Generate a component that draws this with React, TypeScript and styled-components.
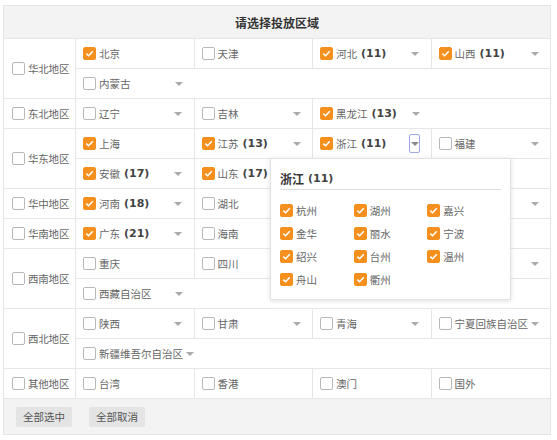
import React from "react"
import styled, { createGlobalStyle, css } from "styled-components"

type Province = {
  name: string
  count?: number
  checked?: boolean
  more?: boolean
  open?: boolean
}

type Region = {
  name: string
  rows: Province[][]
}

const regions: Region[] = [
  {
    name: "华北地区",
    rows: [
      [
        { name: "北京", checked: true },
        { name: "天津" },
        { name: "河北", count: 11, checked: true, more: true },
        { name: "山西", count: 11, checked: true, more: true },
      ],
      [{ name: "内蒙古", more: true }],
    ],
  },
  {
    name: "东北地区",
    rows: [
      [
        { name: "辽宁", more: true },
        { name: "吉林", more: true },
        { name: "黑龙江", count: 13, checked: true, more: true },
      ],
    ],
  },
  {
    name: "华东地区",
    rows: [
      [
        { name: "上海", checked: true },
        { name: "江苏", count: 13, checked: true, more: true },
        { name: "浙江", count: 11, checked: true, more: true, open: true },
        { name: "福建", more: true },
      ],
      [
        { name: "安徽", count: 17, checked: true, more: true },
        { name: "山东", count: 17, checked: true, more: true },
      ],
    ],
  },
  {
    name: "华中地区",
    rows: [
      [
        { name: "河南", count: 18, checked: true, more: true },
        { name: "湖北" },
        { name: "湖南", more: true },
        { name: "江西", more: true },
      ],
    ],
  },
  {
    name: "华南地区",
    rows: [
      [
        { name: "广东", count: 21, checked: true, more: true },
        { name: "海南" },
        { name: "广西", more: true },
      ],
    ],
  },
  {
    name: "西南地区",
    rows: [
      [
        { name: "重庆" },
        { name: "四川" },
        { name: "贵州", more: true },
        { name: "云南", more: true },
      ],
      [{ name: "西藏自治区", more: true }],
    ],
  },
  {
    name: "西北地区",
    rows: [
      [
        { name: "陕西", more: true },
        { name: "甘肃", more: true },
        { name: "青海", more: true },
        { name: "宁夏回族自治区", more: true },
      ],
      [{ name: "新疆维吾尔自治区", more: true }],
    ],
  },
  {
    name: "其他地区",
    rows: [
      [{ name: "台湾" }, { name: "香港" }, { name: "澳门" }, { name: "国外" }],
    ],
  },
]

const cities = ["杭州", "湖州", "嘉兴", "金华", "丽水", "宁波", "绍兴", "台州", "温州", "舟山", "衢州"]

const GlobalStyle = createGlobalStyle`
  body {
    margin: 0;
    background: #fff;
    font-family: "Noto Sans CJK SC", "Noto Sans", sans-serif;
  }
`

const Panel = styled.div`
  margin: 5px 0 0 3px;
  width: 548px;
  border: 1px solid #e4e4e4;
  box-sizing: border-box;
  font-size: 10.5px;
  color: #666;
`

const Header = styled.div`
  height: 32px;
  display: flex;
  align-items: center;
  justify-content: center;
  background: #f3f3f3;
  border-bottom: 1px solid #e6e6e6;
  font-size: 12px;
  font-weight: bold;
  color: #333;
`

const RegionRow = styled.div`
  display: flex;
  border-bottom: 1px solid #e6e6e6;
`

const RegionCell = styled.div`
  width: 72px;
  flex: 0 0 72px;
  box-sizing: border-box;
  border-right: 1px solid #e6e6e6;
  display: flex;
  align-items: center;
  padding-left: 8px;
  letter-spacing: -0.2px;
`

const Body = styled.div`
  flex: 1;
  min-width: 0;
`

const SubRow = styled.div`
  display: flex;
  height: 29px;
  & + & {
    border-top: 1px solid #e6e6e6;
  }
`

const Item = styled.div`
  position: relative;
  width: 25%;
  flex: 0 0 25%;
  box-sizing: border-box;
  display: flex;
  align-items: center;
  padding: 0 11px 0 7px;
  border-right: 1px solid #e6e6e6;
  white-space: nowrap;
  &:last-child {
    border-right: none;
  }
`

const Box = styled.span<{ $on?: boolean }>`
  width: 13px;
  height: 13px;
  flex: 0 0 13px;
  box-sizing: border-box;
  border-radius: 2px;
  margin-right: 3px;
  display: inline-flex;
  align-items: center;
  justify-content: center;
  ${(p) =>
    p.$on
      ? css`
          background: #f5901f;
          border: 1px solid #f5901f;
        `
      : css`
          background: #fff;
          border: 1px solid #b8b8b8;
        `}
`

const Count = styled.b`
  font-family: "DejaVu Sans", sans-serif;
  font-size: 11px;
  color: #444;
  margin-left: 4px;
`

const ArrowBox = styled.span<{ $active?: boolean }>`
  margin-left: auto;
  padding-left: 2px;
  width: 11px;
  height: 19px;
  flex: 0 0 11px;
  box-sizing: border-box;
  display: flex;
  align-items: center;
  justify-content: center;
  border-radius: 2px;
  border: 1px solid ${(p) => (p.$active ? "#9ea8e4" : "transparent")};
  &::after {
    content: "";
    border-left: 4px solid transparent;
    border-right: 4px solid transparent;
    border-top: 4px solid ${(p) => (p.$active ? "#888" : "#aaa")};
  }
`

const Popover = styled.div`
  position: absolute;
  left: -43px;
  top: 100%;
  z-index: 10;
  width: 241px;
  box-sizing: border-box;
  padding: 10px 9px 8px;
  background: #fff;
  border: 1px solid #e2e2e2;
  box-shadow: 0 1px 5px rgba(0, 0, 0, 0.12);
`

const PopTitle = styled.div`
  height: 19px;
  display: flex;
  align-items: center;
  font-size: 12px;
  font-weight: bold;
  color: #333;
  padding-bottom: 1px;
  border-bottom: 1px solid #dcdcdc;
  margin-bottom: 9px;
`

const CityGrid = styled.div`
  display: grid;
  grid-template-columns: repeat(3, 1fr);
  grid-auto-rows: 23px;
`

const City = styled.label`
  display: flex;
  align-items: center;
  color: #666;
`

const Footer = styled.div`
  height: 35px;
  display: flex;
  align-items: center;
  gap: 17px;
  padding-left: 12px;
  background: #f3f3f3;
`

const Button = styled.button`
  width: 56px;
  height: 20px;
  padding: 0;
  border: none;
  border-radius: 2px;
  background: #e4e4e4;
  font-family: inherit;
  font-size: 10.5px;
  color: #555;
`

const Check: React.FC<{ on?: boolean }> = ({ on }) => (
  <Box $on={on}>
    {on && (
      <svg width="9" height="9" viewBox="0 0 9 9">
        <polyline points="1.3,4.6 3.6,6.8 7.8,2.2" fill="none" stroke="#fff" strokeWidth="1.5" />
      </svg>
    )}
  </Box>
)

const ProvinceItem: React.FC<{ p: Province }> = ({ p }) => (
  <Item>
    <Check on={p.checked} />
    <span>{p.name}</span>
    {p.count !== undefined && <Count>({p.count})</Count>}
    {p.more && <ArrowBox $active={p.open} />}
    {p.open && (
      <Popover>
        <PopTitle>
          {p.name}
          <Count>({p.count})</Count>
        </PopTitle>
        <CityGrid>
          {cities.map((c) => (
            <City key={c}>
              <Check on />
              {c}
            </City>
          ))}
        </CityGrid>
      </Popover>
    )}
  </Item>
)

export default function App() {
  return (
    <>
      <GlobalStyle />
      <Panel>
        <Header>请选择投放区域</Header>
        {regions.map((r) => (
          <RegionRow key={r.name}>
            <RegionCell>
              <Check />
              {r.name}
            </RegionCell>
            <Body>
              {r.rows.map((row, i) => (
                <SubRow key={i}>
                  {row.map((p) => (
                    <ProvinceItem key={p.name} p={p} />
                  ))}
                </SubRow>
              ))}
            </Body>
          </RegionRow>
        ))}
        <Footer>
          <Button>全部选中</Button>
          <Button>全部取消</Button>
        </Footer>
      </Panel>
    </>
  )
}
